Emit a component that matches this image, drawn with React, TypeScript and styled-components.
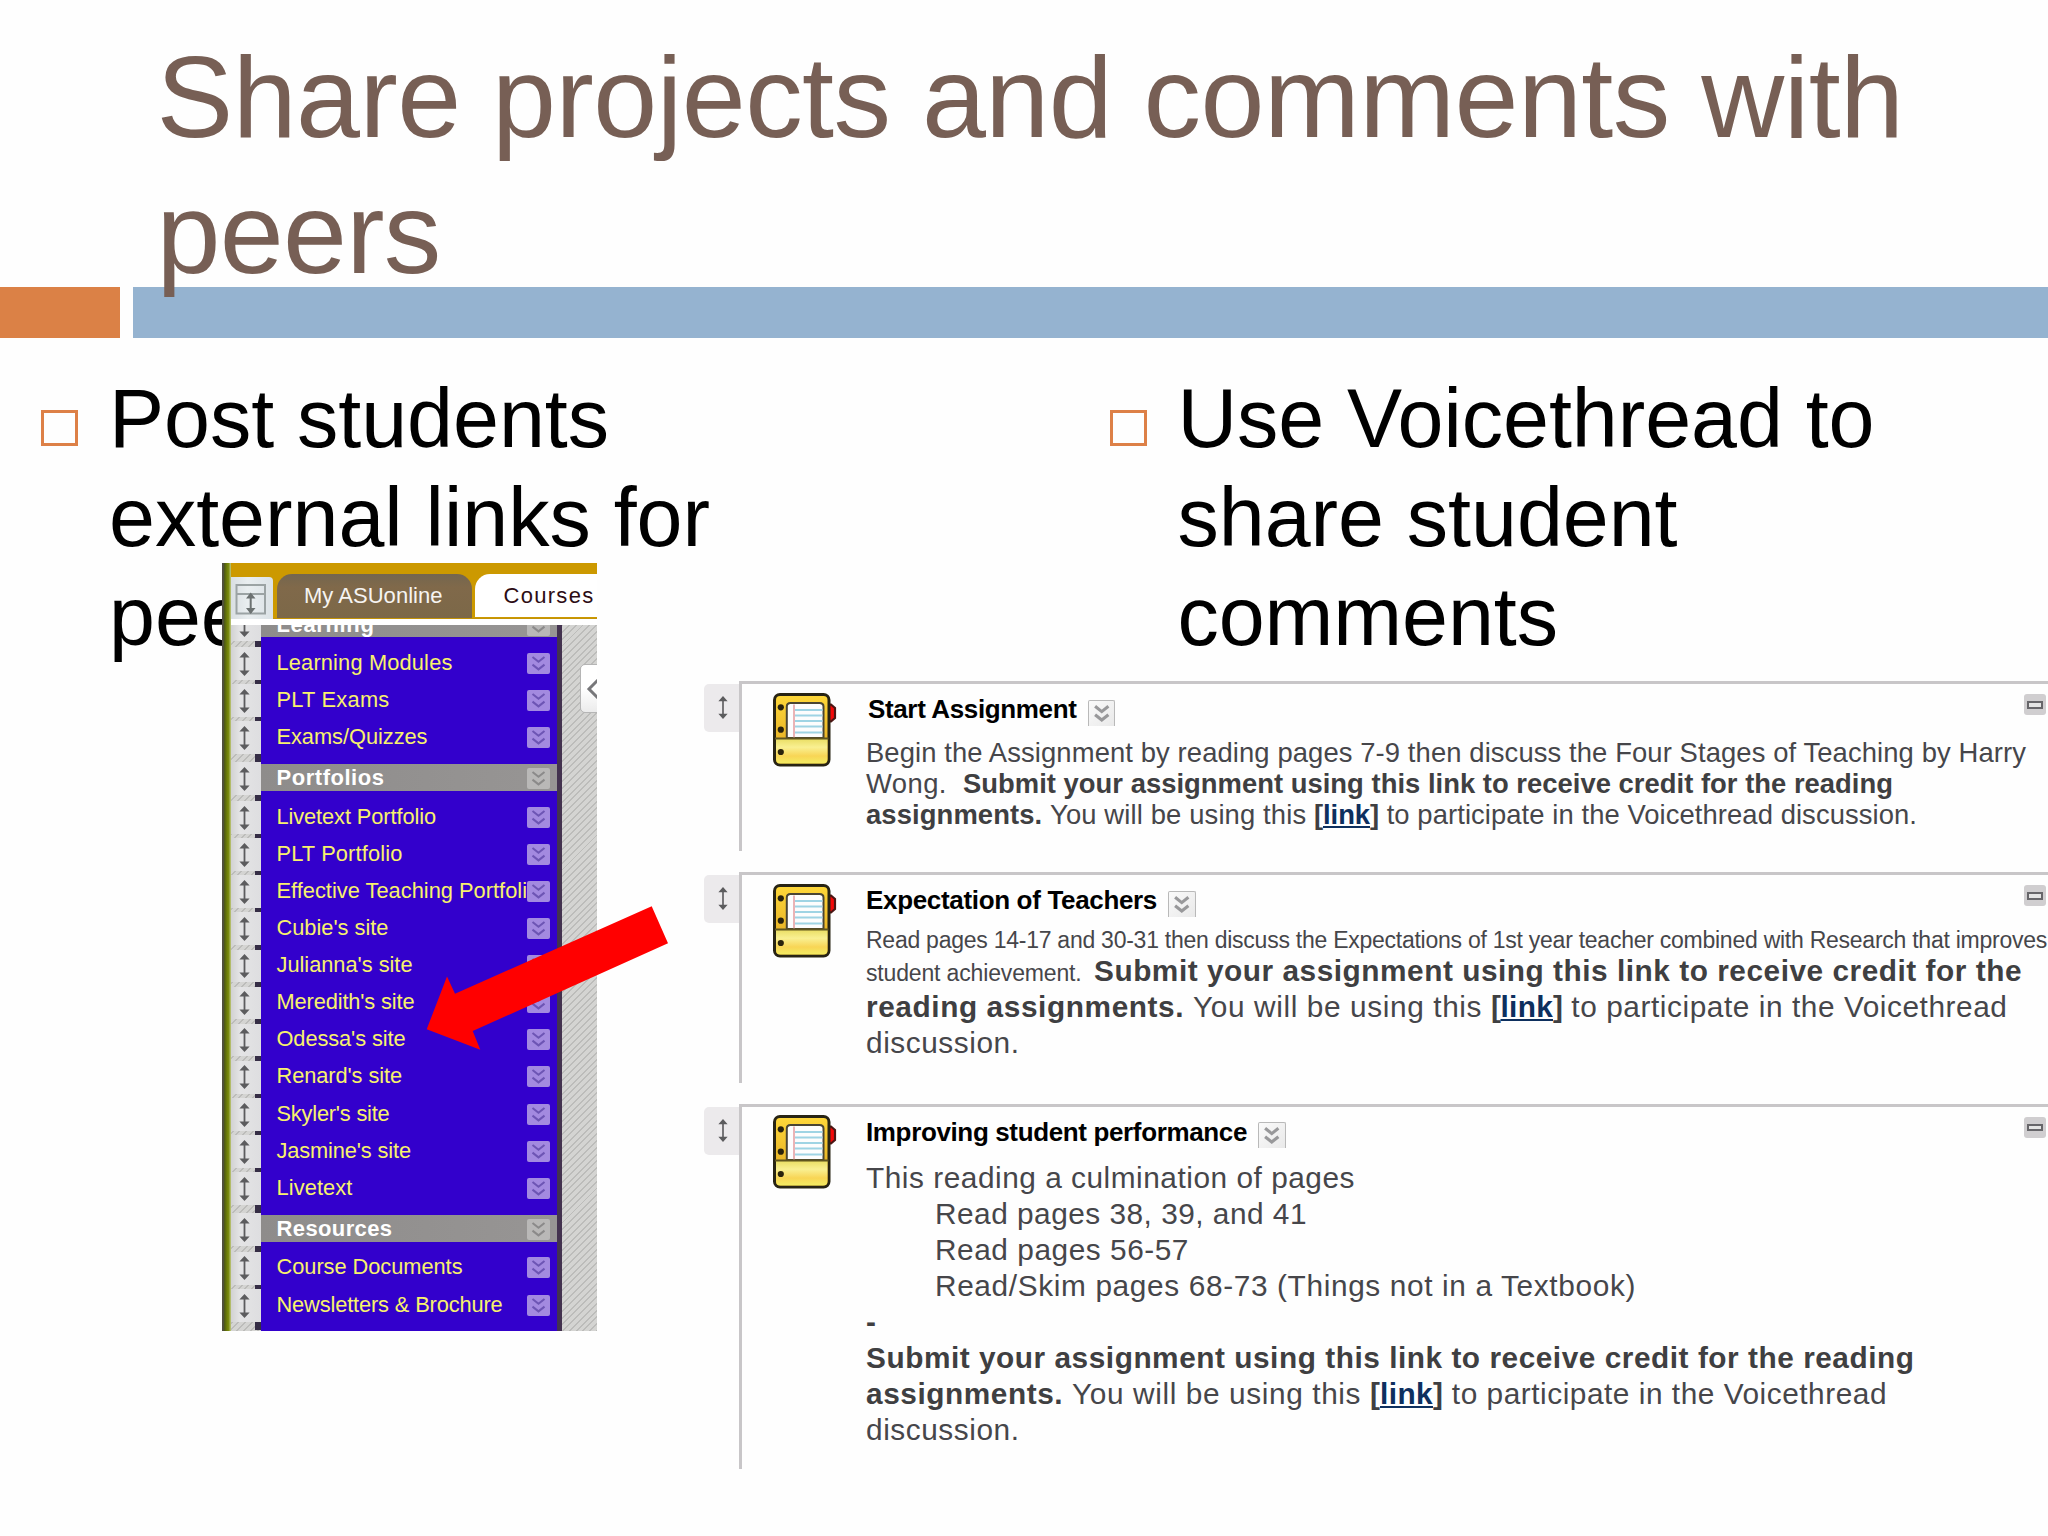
import React, { useLayoutEffect, useRef, useState } from "react";
import styled, { createGlobalStyle, css } from "styled-components";

const Global = createGlobalStyle`
  html, body { margin: 0; padding: 0; background: #fefefe; }
  body { width: 2048px; height: 1536px; overflow: hidden; font-family: "Liberation Sans", Arial, sans-serif; }
  * { box-sizing: border-box; }
`;

/* ---------- text that is tracked to an exact measure ---------- */

const Tracked = styled.span`
  display: inline-block;
  white-space: pre;
  line-height: 1;
  text-decoration: inherit;
`;

function Fit({ w, children }: { w: number; children: string }) {
  const ref = useRef<HTMLSpanElement>(null);
  const [spacing, setSpacing] = useState(0);
  useLayoutEffect(() => {
    if (!ref.current) return;
    const natural = ref.current.getBoundingClientRect().width - spacing * children.length;
    setSpacing((w - natural) / children.length);
  }, [w, children]);
  return (
    <Tracked ref={ref} style={{ letterSpacing: `${spacing}px` }}>
      {children}
    </Tracked>
  );
}

/* ---------- slide ---------- */

const Slide = styled.main`
  position: relative;
  width: 2048px;
  height: 1536px;
  overflow: hidden;
  background: #fefefe;
`;

const Title = styled.h1`
  position: relative;
  z-index: 1;
  margin: 0;
  height: 287px;
  padding: 28.5px 0 0 156.5px;
  color: #775f55;
  font-size: 115px;
  font-weight: 400;
`;

const TitleLine = styled.div`
  height: 136.6px;
  line-height: 136.6px;
`;

const Band = styled.div`
  display: grid;
  grid-template-columns: 120px 1fr;
  column-gap: 12.5px;
  height: 51px;
`;

const BandPart = styled.div<{ $color: string }>`
  background: ${(p) => p.$color};
`;

const Columns = styled.div`
  display: grid;
  grid-template-columns: 1068.5px 1fr;
  height: 343px;
  padding: 31px 0 0 41px;
`;

const Point = styled.div`
  display: flex;
  gap: 31px;
  font-size: 82.6px;
  color: #000;
`;

const Square = styled.i`
  flex: none;
  width: 37px;
  height: 36px;
  margin-top: 41px;
  border: 3.5px solid #dd8047;
`;

const PointLine = styled.div`
  height: 99px;
  line-height: 99px;
`;

/* ---------- course menu ---------- */

const hatch = css`
  background: repeating-linear-gradient(135deg, #d4d4d2 0 3.4px, #bcbcba 3.4px 4.8px);
`;

const Menu = styled.aside`
  position: absolute;
  left: 222px;
  top: 563px;
  width: 375px;
  height: 768px;
  display: flex;
  overflow: hidden;
  background: #fff;
`;

const Edge = styled.div`
  flex: none;
  width: 9px;
  background: linear-gradient(90deg, #50503c 0 1.6px, #4a5518 2px, #6d7d06 5px, #7a8b10 6.5px, #c0c880 9px);
`;

const MenuMain = styled.div`
  flex: 1;
  min-width: 0;
  display: flex;
  flex-direction: column;
`;

const Tabs = styled.div`
  flex: none;
  display: flex;
  align-items: flex-end;
  height: 56px;
  background: #cc9900;
  border-bottom: 1px solid #c39208;
`;

const LayoutButton = styled.div`
  flex: none;
  width: 42px;
  height: 42px;
  margin-bottom: -1px;
  padding: 7px 0 0 4px;
  border-radius: 0 4px 0 0;
  background: linear-gradient(90deg, #d9dfe2, #e9eef0 40%, #dbe2e6);
`;

const Tab = styled.div<{ $active?: boolean }>`
  flex: none;
  width: ${(p) => (p.$active ? 150 : 195)}px;
  height: ${(p) => (p.$active ? 43 : 44)}px;
  margin-left: 3.5px;
  margin-bottom: ${(p) => (p.$active ? 1.5 : 0)}px;
  padding-left: ${(p) => (p.$active ? 28.5 : 27.5)}px;
  border-radius: 15px 15px 0 0;
  line-height: ${(p) => (p.$active ? 43 : 44)}px;
  font-size: 22px;
  color: ${(p) => (p.$active ? "#2c0c14" : "#f6f4f2")};
  background: ${(p) => (p.$active ? "#fff" : "linear-gradient(#74664f, #80694a 30%, #7c6848)")};
`;

const MenuBody = styled.div`
  flex: 1;
  display: flex;
  margin-top: 6px;
  overflow: hidden;
  ${hatch}
`;

const Rows = styled.div`
  flex: none;
  width: 331px;
  margin-top: -16.5px;
  border-right: 5px solid #43324f;
  background: linear-gradient(90deg, transparent 30px, #3300cc 30px);
`;

const Row = styled.div<{ $gap: number }>`
  display: flex;
  height: ${(p) => 32.65 + p.$gap}px;
`;

const HandleColumn = styled.div`
  width: 30px;
  flex: none;
  display: flex;
  flex-direction: column;
`;

const Handle = styled.div`
  height: 32.65px;
  padding: 4.5px 0 0 7.5px;
  background: linear-gradient(90deg, #d2d2d2, #e4e4e5 30%, #dedee0);
`;

const Gap = styled.div`
  flex: 1;
  border-right: 6px solid #352d45;
`;

const Label = styled.div<{ $head?: boolean }>`
  display: flex;
  justify-content: space-between;
  width: 296px;
  height: ${(p) => (p.$head ? 26.7 : 32)}px;
  margin-top: ${(p) => (p.$head ? 1.5 : 0)}px;
  padding: ${(p) => (p.$head ? "4.5px 7px 0 15.5px" : "5.5px 7px 0 15.5px")};
  background: ${(p) => (p.$head ? "linear-gradient(90deg, #8e8c8b, #979594)" : "transparent")};
  color: ${(p) => (p.$head ? "#fff" : "#f8f26c")};
  font-size: ${(p) => (p.$head ? 22 : 21.8)}px;
  font-weight: ${(p) => (p.$head ? 700 : 400)};
  line-height: 14px;
`;

const Expand = styled.div<{ $head?: boolean }>`
  width: 23px;
  height: 21px;
  flex: none;
  border-radius: 2px;
  background: ${(p) => (p.$head ? "#b9b8b7" : "#a38ae0")};
`;

const LabelText = styled.div`
  margin-top: -1px;
  height: 22px;
  white-space: nowrap;
`;

const Collapse = styled.div`
  position: absolute;
  left: 358px;
  top: 101px;
  width: 30px;
  height: 49px;
  padding: 14px 0 0 5px;
  border: 1px solid #b5b5b5;
  border-radius: 5px;
  background: linear-gradient(#fff 50%, #ebebeb);
`;

/* ---------- assignments ---------- */

const Assignments = styled.section`
  display: flex;
  flex-direction: column;
  margin-left: 704px;
`;

const Block = styled.article<{ $h: number; $after: number }>`
  display: flex;
  height: ${(p) => p.$h}px;
  margin-bottom: ${(p) => p.$after}px;
`;

const Grip = styled.div`
  flex: none;
  width: 35px;
  height: 48px;
  margin-top: 3px;
  padding: 12px 0 0 13.5px;
  border-radius: 5px 0 0 5px;
  background: #eceaec;
`;

const Card = styled.div`
  flex: 1;
  min-width: 0;
  display: flex;
  border-top: 3.2px solid #c8c6c8;
  border-left: 3.2px solid #c8c6c8;
`;

const IconSlot = styled.div`
  flex: none;
  width: 124px;
  padding: 8.5px 0 0 31px;
`;

const Copy = styled.div`
  flex: 1;
  min-width: 0;
  padding-top: 8px;
`;

const Heading = styled.div<{ $indent?: number }>`
  display: flex;
  height: 36px;
  margin-bottom: 9px;
  padding-left: ${(p) => p.$indent ?? 0}px;
  gap: 11px;
  line-height: 35px;
  font-size: 26px;
  font-weight: 700;
  color: #000;
`;

const MenuButton = styled.div`
  width: 27.5px;
  height: 26px;
  margin-top: 7.5px;
  border: 1.6px solid #b9b9b9;
  border-bottom: 0;
  border-radius: 2px 2px 0 0;
  background: linear-gradient(135deg, #fafafa, #e9e9e9);
`;

const Line = styled.div<{ $lh: number; $size: number; $indent?: number }>`
  height: ${(p) => p.$lh}px;
  line-height: ${(p) => p.$lh}px;
  padding-left: ${(p) => p.$indent ?? 0}px;
  font-size: ${(p) => p.$size}px;
  white-space: nowrap;
  color: #46464a;
`;

const Strong = styled.b`
  color: #3f3f41;
`;

const Small = styled.span`
  font-size: 23px;
`;

const Link = styled.a`
  color: #0d2f5e;
  font-weight: 700;
  text-decoration: underline;
  text-decoration-thickness: 2px;
  text-underline-offset: 2px;
`;

const Bracket = styled.b`
  color: #3f3f41;
`;

const MinusButton = styled.div`
  flex: none;
  width: 22px;
  height: 21px;
  margin: 10px 2px 0 0;
  padding: 7px 3px;
  border-radius: 3px;
  background: #d0ced0;
`;

const MinusMark = styled.div`
  width: 16px;
  height: 7.5px;
  border: 2px solid #67666a;
  background: #e4e4e4;
`;

/* ---------- drawings ---------- */

const DoubleArrow = ({ h = 24, w = 11 }: { h?: number; w?: number }) => (
  <svg width={w} height={h} viewBox="0 0 11 24" preserveAspectRatio="none" style={{ display: "block" }}>
    <path d="M5.5 2V22" stroke="#5c5c5e" strokeWidth="1.8" />
    <path d="M5.5 0L10.6 5.4H.4ZM5.5 24L10.6 18.6H.4Z" fill="#5c5c5e" />
  </svg>
);

const Chevrons = ({ color, width = 2.4 }: { color: string; width?: number }) => (
  <svg width="100%" height="100%" viewBox="0 0 23 21" style={{ display: "block" }}>
    <path d="M5.5 4L11.5 8.8L17.5 4M5.5 11.6L11.5 16.4L17.5 11.6" fill="none" stroke={color} strokeWidth={width} />
  </svg>
);

const LayoutIcon = () => (
  <svg width="32" height="32" viewBox="0 0 32 32" style={{ display: "block" }}>
    <rect x="1.5" y="1" width="28.5" height="28.5" fill="none" stroke="#9ba3a4" strokeWidth="2" />
    <path d="M1.5 10H30" stroke="#9ba3a4" strokeWidth="2" />
    <path d="M15.7 10V29" stroke="#6c7272" strokeWidth="2" />
    <path d="M15.7 8.5L20.5 14.5H11ZM15.7 30L20.5 24H11Z" fill="#6c7272" />
  </svg>
);

const Notebook = () => (
  <svg width="64" height="75" viewBox="0 0 64 75" style={{ display: "block" }}>
    <defs>
      <linearGradient id="cover" x1="0" x2="0" y1="0" y2="1">
        <stop offset="0" stopColor="#ffd83a" />
        <stop offset="1" stopColor="#dda21d" />
      </linearGradient>
      <linearGradient id="pocket" x1="0" x2="0" y1="0" y2="1">
        <stop offset="0" stopColor="#e9dd62" />
        <stop offset=".35" stopColor="#f9f092" />
        <stop offset=".7" stopColor="#f8d555" />
        <stop offset="1" stopColor="#f3ec62" />
      </linearGradient>
    </defs>
    <path d="M55 11.5H58L62 15V25L58 28.500H55Z" fill="#f40808" stroke="#4c1614" strokeWidth="2.2" />
    <rect x="1.5" y="1.5" width="54.500" height="70.500" rx="5.500" fill="url(#cover)" stroke="#282414" strokeWidth="3" />
    <path d="M3 45.500H54.500V66Q54.500 70.500 50 70.500H7.500Q3 70.500 3 66Z" fill="url(#pocket)" />
    <path d="M13.800 45V13.500Q13.800 10 17.500 10H46.500Q50.500 10 50.500 13.500V45Z" fill="#fdfdfd" stroke="#4a4534" strokeWidth="2" />
    <path d="M22 17H49.500M22 22.500H49.500M22 28H49.500M22 33.500H49.500M22 39.500H49.500" stroke="#9fd4e4" strokeWidth="2" />
    <path d="M21 11.500V44.500" stroke="#eab4b6" strokeWidth="2" />
    <path d="M2 45.500H55.500" stroke="#5f551f" strokeWidth="1.800" />
    <g fill="#2a220c">
      <circle cx="7.800" cy="14.300" r="3.100" />
      <circle cx="7.800" cy="36.700" r="3.100" />
      <circle cx="7.800" cy="59" r="3.100" />
    </g>
  </svg>
);

const ArrowLayer = styled.svg`
  position: absolute;
  left: 426px;
  top: 906px;
`;

/* ---------- data ---------- */

type Entry = { text: string; w: number; gap: number; head?: boolean };

const entries: Entry[] = [
  { text: "Learning", w: 98, gap: 6, head: true },
  { text: "Learning Modules", w: 176, gap: 4.5 },
  { text: "PLT Exams", w: 113, gap: 4.5 },
  { text: "Exams/Quizzes", w: 151, gap: 8.3 },
  { text: "Portfolios", w: 108, gap: 6, head: true },
  { text: "Livetext Portfolio", w: 159.5, gap: 4.5 },
  { text: "PLT Portfolio", w: 126, gap: 4.5 },
  { text: "Effective Teaching Portfoli", w: 250.5, gap: 4.5 },
  { text: "Cubie's site", w: 112, gap: 4.5 },
  { text: "Julianna's site", w: 136, gap: 4.5 },
  { text: "Meredith's site", w: 138, gap: 4.5 },
  { text: "Odessa's site", w: 129, gap: 4.5 },
  { text: "Renard's site", w: 125.5, gap: 4.5 },
  { text: "Skyler's site", w: 113, gap: 4.5 },
  { text: "Jasmine's site", w: 134.5, gap: 4.5 },
  { text: "Livetext", w: 76, gap: 8.3 },
  { text: "Resources", w: 116, gap: 6, head: true },
  { text: "Course Documents", w: 186, gap: 4.5 },
  { text: "Newsletters & Brochure", w: 226, gap: 8.3 },
];

const CourseMenu = () => (
  <Menu>
    <Edge />
    <MenuMain>
      <Tabs>
        <LayoutButton><LayoutIcon /></LayoutButton>
        <Tab><Fit w={138.5}>My ASUonline</Fit></Tab>
        <Tab $active><Fit w={91}>Courses</Fit></Tab>
      </Tabs>
      <MenuBody>
        <Rows>
          {entries.map((e) => (
            <Row key={e.text} $gap={e.gap}>
              <HandleColumn>
                <Handle><DoubleArrow /></Handle>
                <Gap />
              </HandleColumn>
              <Label $head={e.head}>
                <LabelText><Fit w={e.w}>{e.text}</Fit></LabelText>
                <Expand $head={e.head}>
                  <Chevrons color={e.head ? "#8b8a8a" : "#6d55b4"} width={2} />
                </Expand>
              </Label>
            </Row>
          ))}
        </Rows>
      </MenuBody>
    </MenuMain>
    <Collapse>
      <svg width="14" height="20" viewBox="0 0 14 20"><path d="M12 1L3 10L12 19" fill="none" stroke="#77777a" strokeWidth="3" /></svg>
    </Collapse>
  </Menu>
);

type BlockProps = {
  title: string;
  titleWidth: number;
  indent?: number;
  h: number;
  after: number;
  children: React.ReactNode;
};

const Assignment = ({ title, titleWidth, indent, h, after, children }: BlockProps) => (
  <Block $h={h} $after={after}>
    <Grip><DoubleArrow h={23} w={10} /></Grip>
    <Card>
      <IconSlot><Notebook /></IconSlot>
      <Copy>
        <Heading $indent={indent}>
          <span><Fit w={titleWidth}>{title}</Fit></span>
          <MenuButton><Chevrons color="#98989a" width={2.8} /></MenuButton>
        </Heading>
        {children}
      </Copy>
      <MinusButton><MinusMark /></MinusButton>
    </Card>
  </Block>
);

export default function App() {
  return (
    <>
      <Global />
      <Slide>
        <Title>
          <TitleLine><Fit w={1747}>Share projects and comments with</Fit></TitleLine>
          <TitleLine><Fit w={284}>peers</Fit></TitleLine>
        </Title>
        <Band>
          <BandPart $color="#db8146" />
          <BandPart $color="#95b3d0" />
        </Band>
        <Columns>
          <Point>
            <Square />
            <div>
              <PointLine><Fit w={500}>Post students</Fit></PointLine>
              <PointLine><Fit w={601}>external links for</Fit></PointLine>
              <PointLine>peers</PointLine>
            </div>
          </Point>
          <Point>
            <Square />
            <div>
              <PointLine><Fit w={697}>Use Voicethread to</Fit></PointLine>
              <PointLine><Fit w={500}>share student</Fit></PointLine>
              <PointLine><Fit w={380.5}>comments</Fit></PointLine>
            </div>
          </Point>
        </Columns>

        <Assignments>
          <Assignment title="Start Assignment" titleWidth={208.5} indent={2} h={170} after={21}>
            <Line $lh={31} $size={27.4}>
              <Fit w={1160}>Begin the Assignment by reading pages 7-9 then discuss the Four Stages of Teaching by Harry</Fit>
            </Line>
            <Line $lh={31} $size={27.4}>
              <Fit w={97}>{"Wong.  "}</Fit>
              <Strong><Fit w={930}>Submit your assignment using this link to receive credit for the reading</Fit></Strong>
            </Line>
            <Line $lh={31} $size={27.4}>
              <Strong><Fit w={184}>{"assignments. "}</Fit></Strong>
              <Fit w={264}>{"You will be using this "}</Fit>
              <Bracket><Fit w={9}>[</Fit></Bracket>
              <Link><Fit w={47}>link</Fit></Link>
              <Bracket><Fit w={9}>]</Fit></Bracket>
              <Fit w={538}>{" to participate in the Voicethread discussion."}</Fit>
            </Line>
          </Assignment>

          <Assignment title="Expectation of Teachers" titleWidth={291} h={211} after={20.5}>
            <Line $lh={25} $size={23}>
              <Fit w={1181}>Read pages 14-17 and 30-31 then discuss the Expectations of 1st year teacher combined with Research that improves</Fit>
            </Line>
            <Line $lh={36} $size={29.8}>
              <Small><Fit w={228}>{"student achievement.  "}</Fit></Small>
              <Strong><Fit w={928}>Submit your assignment using this link to receive credit for the</Fit></Strong>
            </Line>
            <Line $lh={36} $size={29.8}>
              <Strong><Fit w={327}>{"reading assignments. "}</Fit></Strong>
              <Fit w={298}>{"You will be using this "}</Fit>
              <Bracket><Fit w={9.5}>[</Fit></Bracket>
              <Link><Fit w={52.5}>link</Fit></Link>
              <Bracket><Fit w={9.5}>]</Fit></Bracket>
              <Fit w={445}>{" to participate in the Voicethread"}</Fit>
            </Line>
            <Line $lh={36} $size={29.8}><Fit w={153.5}>discussion.</Fit></Line>
          </Assignment>

          <Assignment title="Improving student performance" titleWidth={381} h={365.5} after={0}>
            <Line $lh={36} $size={29.8}><Fit w={489}>This reading a culmination of pages</Fit></Line>
            <Line $lh={36} $size={29.8} $indent={69}><Fit w={372}>Read pages 38, 39, and 41</Fit></Line>
            <Line $lh={36} $size={29.8} $indent={69}><Fit w={254}>Read pages 56-57</Fit></Line>
            <Line $lh={36} $size={29.8} $indent={69}><Fit w={701}>Read/Skim pages 68-73 (Things not in a Textbook)</Fit></Line>
            <Line $lh={36} $size={29.8}><Strong>-</Strong></Line>
            <Line $lh={36} $size={29.8}>
              <Strong><Fit w={1048.5}>Submit your assignment using this link to receive credit for the reading</Fit></Strong>
            </Line>
            <Line $lh={36} $size={29.8}>
              <Strong><Fit w={206}>{"assignments. "}</Fit></Strong>
              <Fit w={298}>{"You will be using this "}</Fit>
              <Bracket><Fit w={10}>[</Fit></Bracket>
              <Link><Fit w={53}>link</Fit></Link>
              <Bracket><Fit w={10}>]</Fit></Bracket>
              <Fit w={444}>{" to participate in the Voicethread"}</Fit>
            </Line>
            <Line $lh={36} $size={29.8}><Fit w={153.5}>discussion.</Fit></Line>
          </Assignment>
        </Assignments>

        <CourseMenu />
        <ArrowLayer width="243" height="145" viewBox="426 906 243 145">
          <path d="M426.700 1029.300L447 976.500L455 993.700L651.700 906.300L668 943.300L472.700 1031L480.300 1049.700Z" fill="#ff0000" />
        </ArrowLayer>
      </Slide>
    </>
  );
}
